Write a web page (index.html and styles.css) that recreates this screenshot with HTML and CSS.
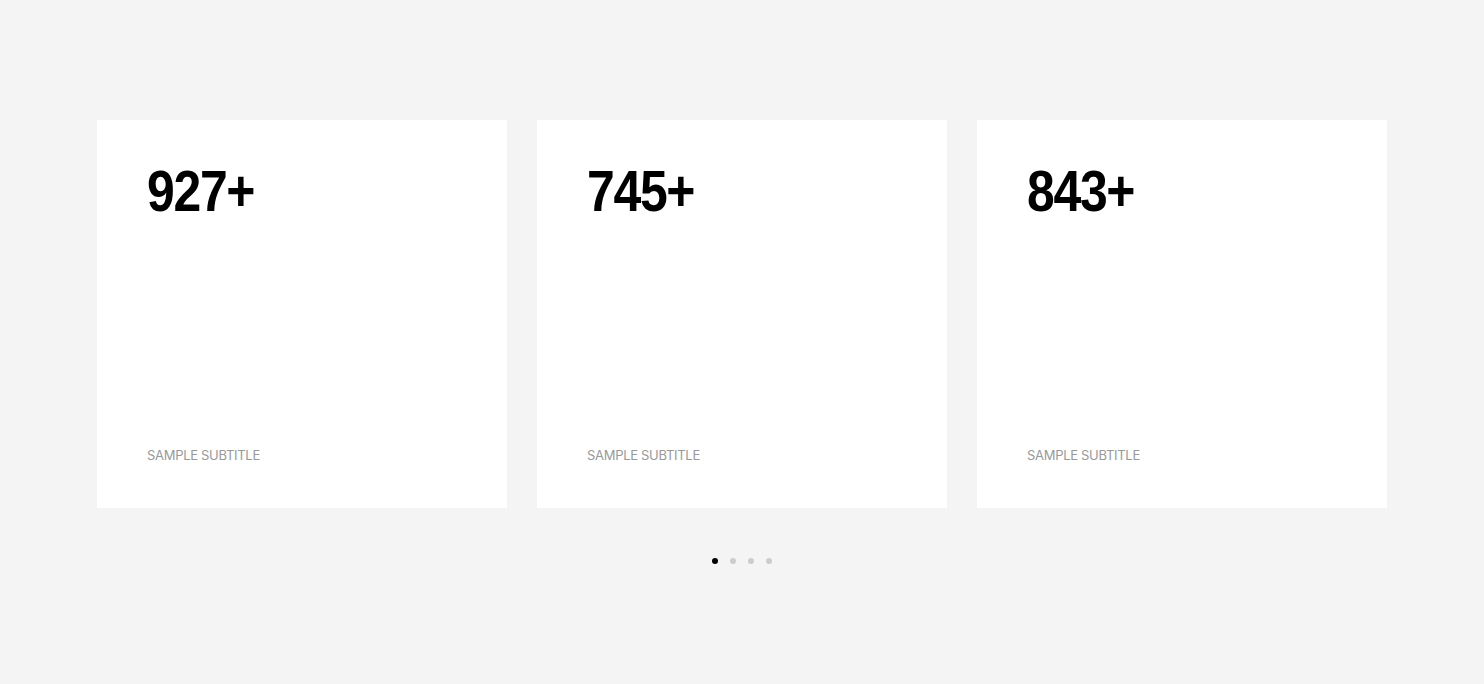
FILE: index.html
```html
<!DOCTYPE html>
<html>
<head>
<meta charset="utf-8">
<link rel="stylesheet" href="styles.css">
</head>
<body>
<main class="section">
  <div class="cards">
    <div class="card"><div class="num">927+</div><div class="sub">SAMPLE SUBTITLE</div></div>
    <div class="card"><div class="num">745+</div><div class="sub">SAMPLE SUBTITLE</div></div>
    <div class="card"><div class="num">843+</div><div class="sub">SAMPLE SUBTITLE</div></div>
  </div>
  <div class="dots">
    <span class="dot active"></span><span class="dot"></span><span class="dot"></span><span class="dot"></span>
  </div>
</main>
</body>
</html>
```
FILE: styles.css
```css
html, body { margin: 0; padding: 0; }
body { background: #f4f4f4; font-family: "Inter", "Liberation Sans", sans-serif; height: 684px; }
.section { padding-top: 120px; display: flex; flex-direction: column; align-items: center; }
.cards { display: flex; gap: 30px; width: 1290px; }
.card { flex: 1; height: 388px; background: #fff; box-sizing: border-box; padding: 42px 50px 45px; display: flex; flex-direction: column; justify-content: space-between; align-items: flex-start; }
.num { font-family: "Liberation Sans", sans-serif; font-size: 58px; font-weight: 700; letter-spacing: -1.5px; line-height: 1; color: #000; transform: scaleX(0.86); transform-origin: left center; }
.sub { font-size: 13px; color: #999; letter-spacing: -0.3px; }
.dots { display: flex; gap: 12px; margin-top: 50px; }
.dot { width: 6px; height: 6px; border-radius: 50%; background: #ccc; }
.dot.active { background: #000; }
```
